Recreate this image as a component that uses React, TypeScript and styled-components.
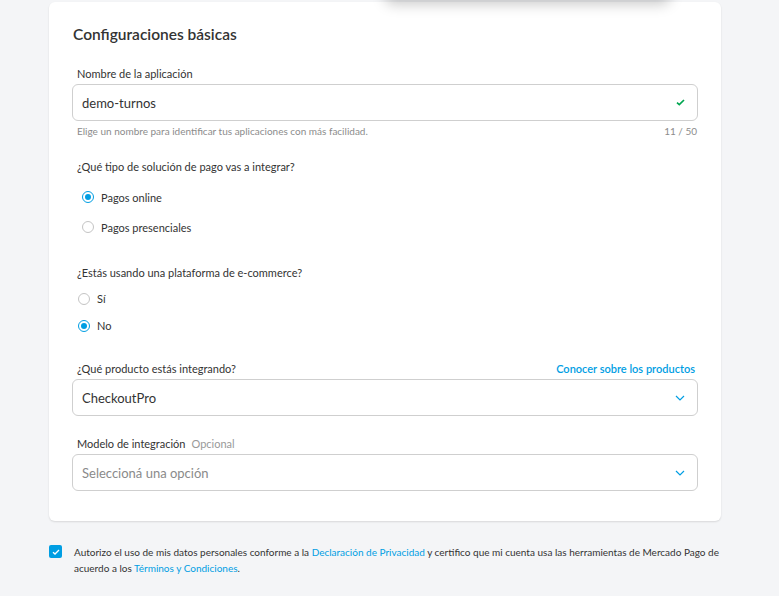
import React from "react";
import styled, { createGlobalStyle } from "styled-components";

const Global = createGlobalStyle`
  html, body { margin: 0; padding: 0; background: #f4f5f7; }
  body { font-family: Lato, "Liberation Sans", Arial, sans-serif; color: #333; overflow: hidden; }
  * { box-sizing: border-box; }
`;

const Page = styled.div`
  position: relative;
  width: 779px;
  height: 596px;
  padding: 2px 0 0 49px;
  background: #f4f5f7;
  overflow: hidden;
`;

const PopoverShadow = styled.div`
  position: absolute;
  top: -40px;
  left: 385px;
  width: 285px;
  height: 40px;
  border-radius: 8px;
  background: #fff;
  box-shadow: 0 4px 14px rgba(0, 0, 0, 0.22);
`;

const Card = styled.section`
  width: 672px;
  background: #fff;
  border-radius: 6px;
  box-shadow: 0 1px 2px rgba(0, 0, 0, 0.12);
  padding: 22px 23px 30px 23px;
  display: flex;
  flex-direction: column;
`;

const Title = styled.h2`
  margin: 0 0 22px 1px;
  font-size: 15.5px;
  line-height: 20px;
  font-weight: 600;
  color: #333;
`;

const LabelRow = styled.div<{ $mt?: number }>`
  display: flex;
  justify-content: space-between;
  align-items: center;
  padding: 0 3px 0 5px;
  margin-top: ${(p) => p.$mt ?? 0}px;
  margin-bottom: 2px;
  font-size: 11px;
  line-height: 16px;
  color: #333;
`;

const Optional = styled.span`
  color: #999;
  margin-left: 6px;
`;

const Link = styled.a`
  color: #009ee3;
  text-decoration: none;
  font-weight: 600;
`;

const Field = styled.div`
  height: 37px;
  border: 1px solid #cfcfcf;
  border-radius: 6px;
  display: flex;
  align-items: center;
  justify-content: space-between;
  padding: 0 12px 0 9px;
`;

const FieldText = styled.span<{ $placeholder?: boolean }>`
  font-size: 13px;
  color: ${(p) => (p.$placeholder ? "#8a8a8a" : "#333")};
`;

const Helper = styled.div`
  display: flex;
  justify-content: space-between;
  padding: 0 1px 0 5px;
  margin-top: 3px;
  font-size: 10px;
  line-height: 14px;
  color: #8c8c8c;
`;

const Question = styled.div<{ $mt: number }>`
  margin-top: ${(p) => p.$mt}px;
  padding-left: 5px;
  font-size: 11px;
  line-height: 16px;
  color: #333;
`;

const RadioGroup = styled.div<{ $mt: number; $indent: number }>`
  margin-top: ${(p) => p.$mt}px;
  padding-left: ${(p) => p.$indent}px;
  display: flex;
  flex-direction: column;
`;

const RadioRow = styled.label<{ $h: number }>`
  height: ${(p) => p.$h}px;
  display: flex;
  align-items: center;
  gap: 7px;
  font-size: 11px;
  color: #333;
`;

const RadioDot = styled.span<{ $on?: boolean }>`
  width: 12px;
  height: 12px;
  border-radius: 50%;
  border: 1px solid ${(p) => (p.$on ? "#009ee3" : "#c4c4c4")};
  display: flex;
  align-items: center;
  justify-content: center;
  background: #fff;
  &::after {
    content: "";
    width: 6px;
    height: 6px;
    border-radius: 50%;
    background: ${(p) => (p.$on ? "#009ee3" : "transparent")};
  }
`;

const Consent = styled.div`
  margin-top: 23px;
  display: flex;
  align-items: flex-start;
  gap: 12px;
  width: 700px;
`;

const CheckBox = styled.span`
  flex: none;
  width: 13px;
  height: 13px;
  margin-top: 1px;
  border-radius: 2px;
  background: #009ee3;
  display: flex;
  align-items: center;
  justify-content: center;
`;

const ConsentText = styled.p`
  margin: 0;
  font-size: 10px;
  line-height: 16px;
  color: #333;
  width: 660px;
`;

const InlineLink = styled.a`
  color: #009ee3;
  text-decoration: none;
`;

const Check = () => (
  <svg width="9" height="7" viewBox="0 0 9 7">
    <path d="M1 3.6 L3.3 5.6 L8 1" fill="none" stroke="#00a650" strokeWidth="1.7" />
  </svg>
);

const Chevron = () => (
  <svg width="10" height="6" viewBox="0 0 10 6">
    <path d="M1 1 L5 5 L9 1" fill="none" stroke="#009ee3" strokeWidth="1.2" />
  </svg>
);

const Tick = () => (
  <svg width="8" height="6" viewBox="0 0 8 6">
    <path d="M1 3.2 L3 5 L7 1" fill="none" stroke="#fff" strokeWidth="1.3" />
  </svg>
);

export default function App() {
  return (
    <Page>
      <Global />
      <PopoverShadow />
      <Card>
        <Title>Configuraciones básicas</Title>
        <LabelRow>Nombre de la aplicación</LabelRow>
        <Field>
          <FieldText>demo-turnos</FieldText>
          <Check />
        </Field>
        <Helper>
          <span>Elige un nombre para identificar tus aplicaciones con más facilidad.</span>
          <span>11 / 50</span>
        </Helper>

        <Question $mt={21}>¿Qué tipo de solución de pago vas a integrar?</Question>
        <RadioGroup $mt={7} $indent={10}>
          <RadioRow $h={30}>
            <RadioDot $on />
            Pagos online
          </RadioRow>
          <RadioRow $h={30}>
            <RadioDot />
            Pagos presenciales
          </RadioRow>
        </RadioGroup>

        <Question $mt={23}>¿Estás usando una plataforma de e-commerce?</Question>
        <RadioGroup $mt={4} $indent={6}>
          <RadioRow $h={27}>
            <RadioDot />
            Sí
          </RadioRow>
          <RadioRow $h={27}>
            <RadioDot $on />
            No
          </RadioRow>
        </RadioGroup>

        <LabelRow $mt={22}>
          <span>¿Qué producto estás integrando?</span>
          <Link href="#">Conocer sobre los productos</Link>
        </LabelRow>
        <Field>
          <FieldText>CheckoutPro</FieldText>
          <Chevron />
        </Field>

        <LabelRow $mt={20}>
          <span>
            Modelo de integración<Optional>Opcional</Optional>
          </span>
        </LabelRow>
        <Field>
          <FieldText $placeholder>Seleccioná una opción</FieldText>
          <Chevron />
        </Field>
      </Card>

      <Consent>
        <CheckBox>
          <Tick />
        </CheckBox>
        <ConsentText>
          Autorizo el uso de mis datos personales conforme a la{" "}
          <InlineLink href="#">Declaración de Privacidad</InlineLink> y certifico que mi cuenta usa las
          herramientas de Mercado Pago de acuerdo a los{" "}
          <InlineLink href="#">Términos y Condiciones</InlineLink>.
        </ConsentText>
      </Consent>
    </Page>
  );
}
